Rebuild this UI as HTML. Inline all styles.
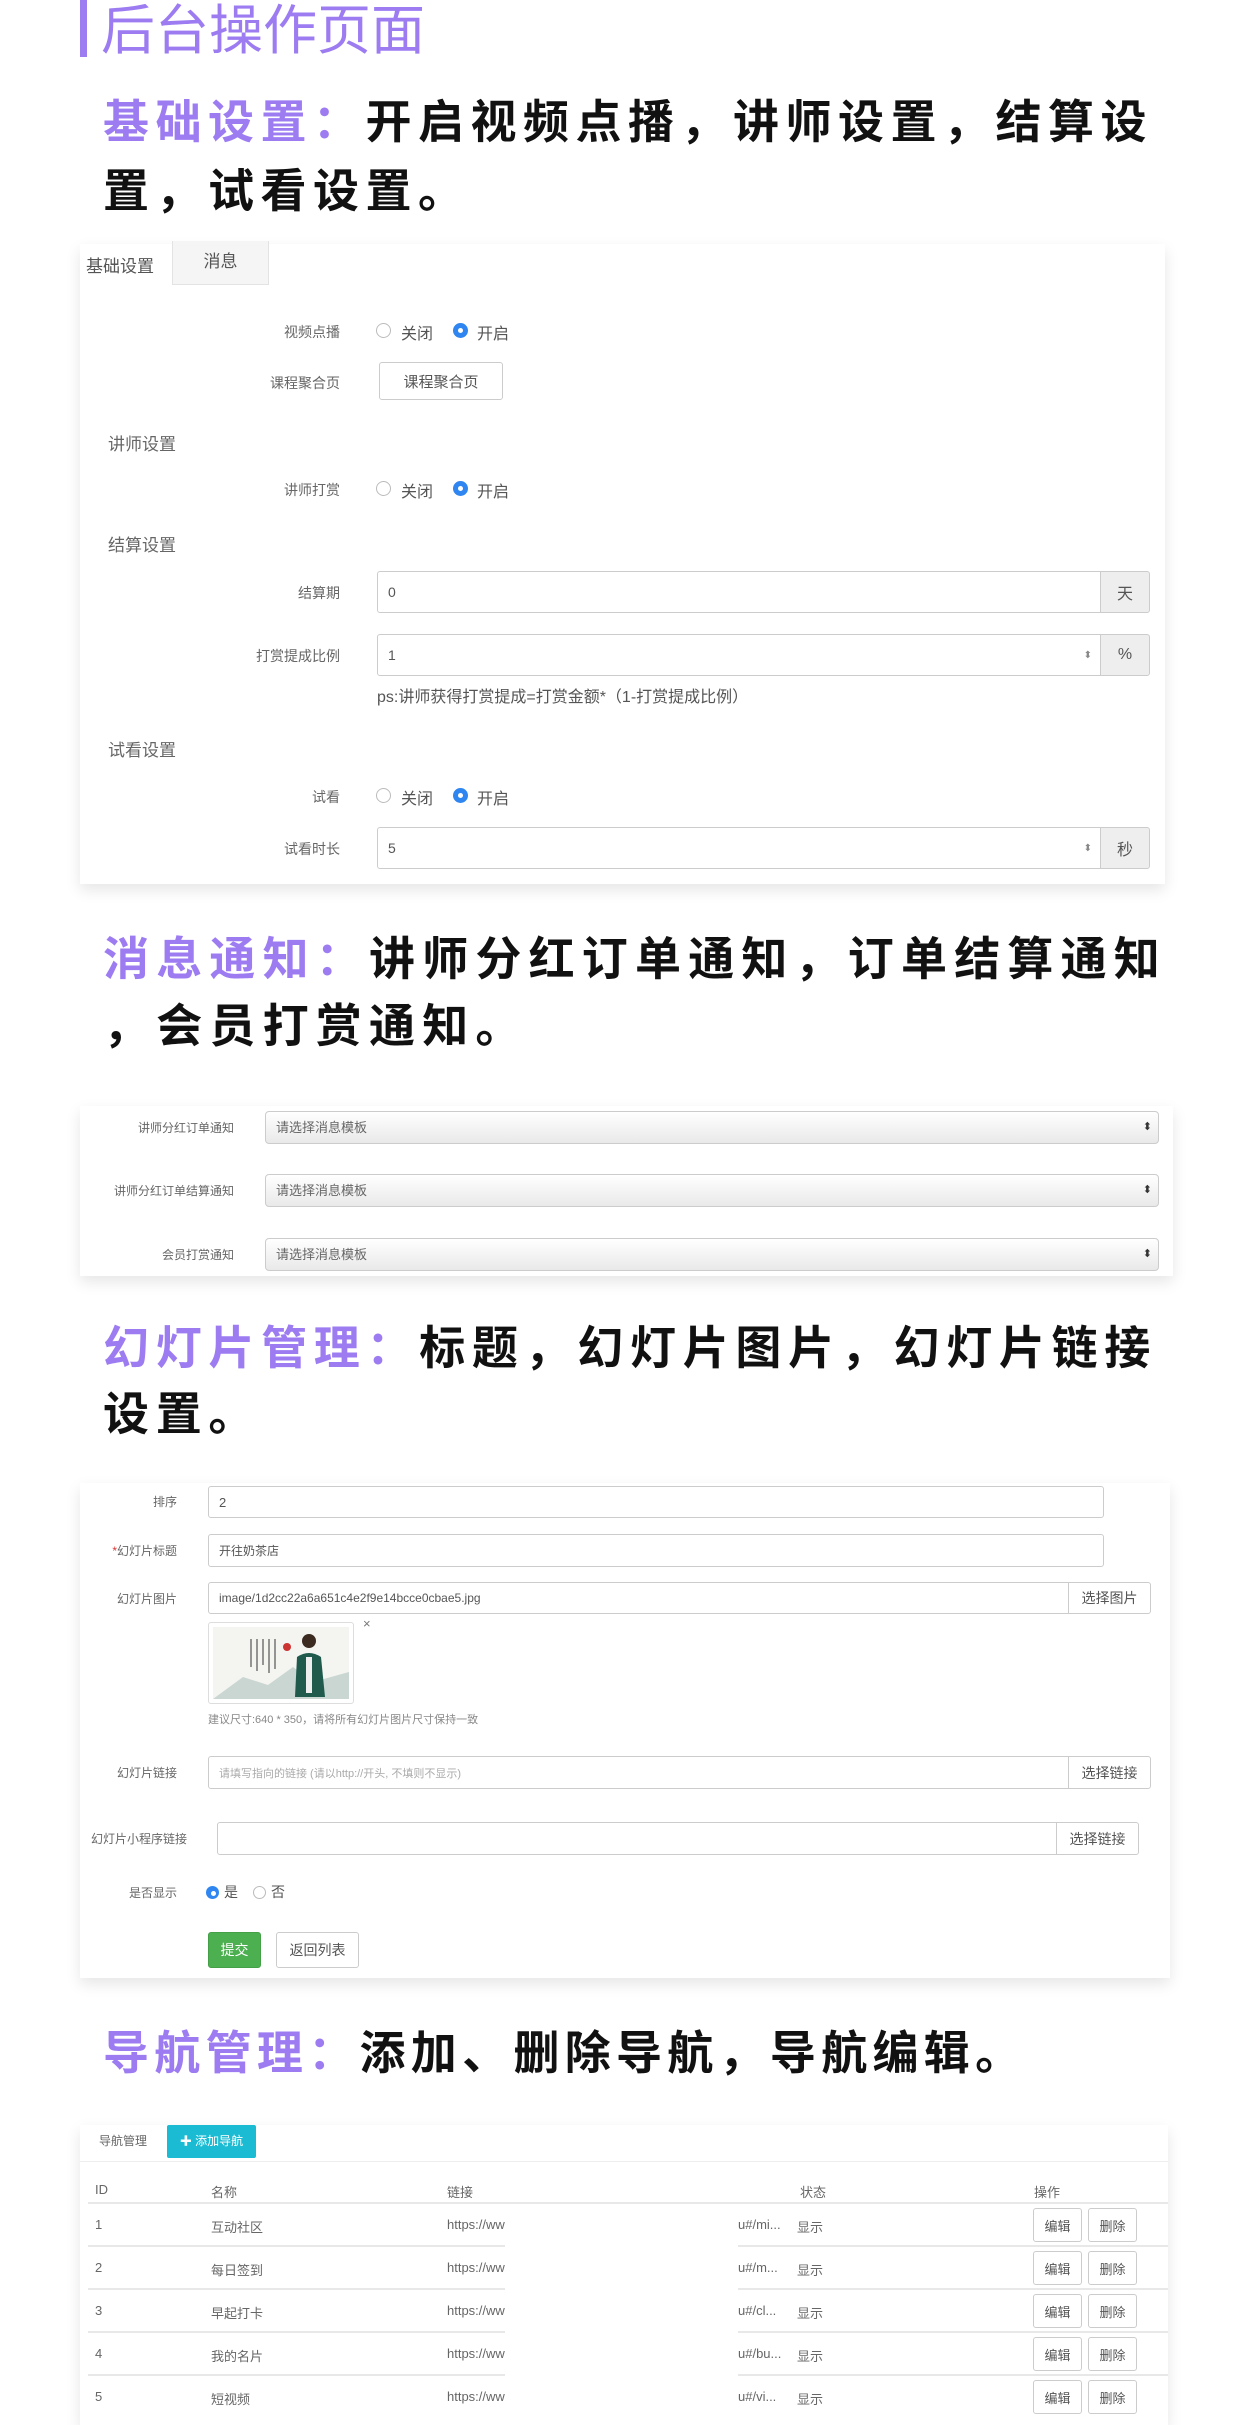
<!DOCTYPE html>
<html><head><meta charset="utf-8"><style>
*{margin:0;padding:0;box-sizing:border-box}
body{width:1242px;height:2404px;background:#fff;position:relative;overflow:hidden;font-family:"Liberation Sans","Noto Sans CJK SC",sans-serif;color:#555}
.a{position:absolute;white-space:nowrap}
.h{position:absolute;left:103px;font-size:46px;font-weight:bold;color:#111;line-height:1;white-space:nowrap}
.h b{color:#9d7cf2;font-weight:bold}
.panel{position:absolute;background:#fff;box-shadow:0 6px 14px rgba(0,0,0,.10)}
.lb{position:absolute;font-size:14px;color:#666;text-align:right;white-space:nowrap}
.sec{position:absolute;font-size:17px;color:#666}
.inp{position:absolute;border:1px solid #ccc;border-radius:3px;background:#fff;font-size:14px;color:#555;padding-left:10px;display:flex;align-items:center}
.add{position:absolute;border:1px solid #ccc;background:#eee;display:flex;align-items:center;justify-content:center;font-size:16px;color:#555;border-radius:0 3px 3px 0}
.rd{position:absolute;width:15px;height:15px;border-radius:50%;border:1px solid #bbb;background:#fff}
.rd.on{border:none;background:#2f86f0}
.rd.on:after{content:"";position:absolute;left:5px;top:5px;width:5px;height:5px;border-radius:50%;background:#fff}
.rt{position:absolute;font-size:16px;color:#555}
.sel{position:absolute;left:265px;width:894px;height:33px;border:1px solid #ccc;border-radius:4px;background:linear-gradient(#fff,#e9e9e9);font-size:13px;color:#666;padding-left:10px;line-height:31px}
.sel:after{content:"⬍";position:absolute;right:6px;top:0;font-size:11px;color:#333}
.btn{position:absolute;border:1px solid #ccc;border-radius:3px;background:#fff;font-size:13px;color:#555;display:flex;align-items:center;justify-content:center}
.td{position:absolute;font-size:13px;color:#666}
.ln{position:absolute;height:2px;background:#e8e8e8}
</style></head><body>

<div class="a" style="left:80px;top:0;width:7px;height:57px;background:#9d7cf2"></div>
<div class="a" style="left:101px;top:4px;font-size:54px;color:#9d7cf2;line-height:1">后台操作页面</div>

<div class="h" style="top:99px;letter-spacing:6.5px"><b>基础设置：</b>开启视频点播，讲师设置，结算设</div>
<div class="h" style="top:168px;letter-spacing:6.5px">置，试看设置。</div>

<!-- panel 1 -->
<div class="panel" style="left:80px;top:244px;width:1085px;height:640px"></div>
<div class="a" style="left:86px;top:252px;font-size:17px;color:#555">基础设置</div>
<div class="a" style="left:172px;top:241px;width:97px;height:44px;background:#f5f5f5;border:1px solid #e3e3e3;border-top:none;font-size:17px;color:#555;text-align:center;line-height:42px">消息</div>

<div class="lb" style="right:902px;top:322px">视频点播</div>
<div class="rd" style="left:376px;top:323px"></div><div class="rt" style="left:401px;top:320px">关闭</div>
<div class="rd on" style="left:453px;top:323px"></div><div class="rt" style="left:477px;top:320px">开启</div>
<div class="lb" style="right:902px;top:373px">课程聚合页</div>
<div class="btn" style="left:379px;top:362px;width:124px;height:38px;font-size:15px">课程聚合页</div>

<div class="sec" style="left:108px;top:430px">讲师设置</div>
<div class="lb" style="right:902px;top:480px">讲师打赏</div>
<div class="rd" style="left:376px;top:481px"></div><div class="rt" style="left:401px;top:478px">关闭</div>
<div class="rd on" style="left:453px;top:481px"></div><div class="rt" style="left:477px;top:478px">开启</div>

<div class="sec" style="left:108px;top:531px">结算设置</div>
<div class="lb" style="right:902px;top:583px">结算期</div>
<div class="inp" style="left:377px;top:571px;width:724px;height:42px;border-radius:3px 0 0 3px">0</div>
<div class="add" style="left:1100px;top:571px;width:50px;height:42px">天</div>
<div class="lb" style="right:902px;top:646px">打赏提成比例</div>
<div class="inp" style="left:377px;top:634px;width:724px;height:42px;border-radius:3px 0 0 3px">1<span style="position:absolute;right:8px;font-size:10px;color:#888">⬍</span></div>
<div class="add" style="left:1100px;top:634px;width:50px;height:42px">%</div>
<div class="a" style="left:377px;top:683px;font-size:16px;color:#555">ps:讲师获得打赏提成=打赏金额*（1-打赏提成比例）</div>

<div class="sec" style="left:108px;top:736px">试看设置</div>
<div class="lb" style="right:902px;top:787px">试看</div>
<div class="rd" style="left:376px;top:788px"></div><div class="rt" style="left:401px;top:785px">关闭</div>
<div class="rd on" style="left:453px;top:788px"></div><div class="rt" style="left:477px;top:785px">开启</div>
<div class="lb" style="right:902px;top:839px">试看时长</div>
<div class="inp" style="left:377px;top:827px;width:724px;height:42px;border-radius:3px 0 0 3px">5<span style="position:absolute;right:8px;font-size:10px;color:#888">⬍</span></div>
<div class="add" style="left:1100px;top:827px;width:50px;height:42px">秒</div>

<!-- heading 2 -->
<div class="h" style="top:936px;letter-spacing:7.2px"><b>消息通知：</b>讲师分红订单通知，订单结算通知</div>
<div class="h" style="top:1003px;letter-spacing:7.2px">，会员打赏通知。</div>

<div class="panel" style="left:80px;top:1106px;width:1093px;height:170px"></div>
<div class="lb" style="right:1008px;top:1119px;font-size:12px">讲师分红订单通知</div>
<div class="sel" style="top:1111px">请选择消息模板</div>
<div class="lb" style="right:1008px;top:1182px;font-size:12px">讲师分红订单结算通知</div>
<div class="sel" style="top:1174px">请选择消息模板</div>
<div class="lb" style="right:1008px;top:1246px;font-size:12px">会员打赏通知</div>
<div class="sel" style="top:1238px">请选择消息模板</div>

<!-- heading 3 -->
<div class="h" style="top:1325px;letter-spacing:6.7px"><b>幻灯片管理：</b>标题，幻灯片图片，幻灯片链接</div>
<div class="h" style="top:1391px;letter-spacing:6.7px">设置。</div>

<div class="panel" style="left:80px;top:1483px;width:1090px;height:495px"></div>
<div class="lb" style="right:1065px;top:1493px;font-size:12px">排序</div>
<div class="inp" style="left:208px;top:1486px;width:896px;height:32px;font-size:13px">2</div>
<div class="lb" style="right:1065px;top:1542px;font-size:12px"><span style="color:#d33">*</span>幻灯片标题</div>
<div class="inp" style="left:208px;top:1534px;width:896px;height:33px;font-size:12px">开往奶茶店</div>
<div class="lb" style="right:1065px;top:1590px;font-size:12px">幻灯片图片</div>
<div class="inp" style="left:208px;top:1582px;width:861px;height:32px;font-size:12px;border-radius:3px 0 0 3px">image/1d2cc22a6a651c4e2f9e14bcce0cbae5.jpg</div>
<div class="btn" style="left:1068px;top:1582px;width:83px;height:32px;border-radius:0 3px 3px 0;font-size:14px">选择图片</div>
<div class="a" style="left:208px;top:1622px;width:146px;height:82px;border:1px solid #ddd;border-radius:3px;padding:4px;background:#fff">
 <svg width="136" height="72" viewBox="0 0 136 72"><rect width="136" height="72" fill="#f4f4f1"/><path d="M0 72 L30 50 L55 58 L80 40 L100 55 L136 45 L136 72Z" fill="#c9d6d2"/><g stroke="#555" stroke-width="1.2"><line x1="38" y1="12" x2="38" y2="40"/><line x1="44" y1="12" x2="44" y2="44"/><line x1="50" y1="12" x2="50" y2="38"/><line x1="56" y1="12" x2="56" y2="46"/><line x1="62" y1="12" x2="62" y2="42"/></g><circle cx="74" cy="20" r="4" fill="#c33"/><circle cx="96" cy="14" r="7" fill="#3a2a20"/><path d="M82 70 L84 30 Q96 22 108 30 L112 70Z" fill="#1f5a4c"/><rect x="93" y="30" width="6" height="36" fill="#eee"/></svg>
</div>
<div class="a" style="left:363px;top:1616px;font-size:13px;color:#777">×</div>
<div class="a" style="left:208px;top:1711px;font-size:11px;color:#888">建议尺寸:640 * 350，请将所有幻灯片图片尺寸保持一致</div>
<div class="lb" style="right:1065px;top:1764px;font-size:12px">幻灯片链接</div>
<div class="inp" style="left:208px;top:1756px;width:861px;height:33px;font-size:11px;color:#aaa;border-radius:3px 0 0 3px">请填写指向的链接 (请以http://开头, 不填则不显示)</div>
<div class="btn" style="left:1068px;top:1756px;width:83px;height:33px;border-radius:0 3px 3px 0;font-size:14px">选择链接</div>
<div class="lb" style="right:1055px;top:1830px;font-size:12px">幻灯片小程序链接</div>
<div class="inp" style="left:217px;top:1822px;width:840px;height:33px;border-radius:3px 0 0 3px"></div>
<div class="btn" style="left:1056px;top:1822px;width:83px;height:33px;border-radius:0 3px 3px 0;font-size:14px">选择链接</div>
<div class="lb" style="right:1065px;top:1884px;font-size:12px">是否显示</div>
<div class="rd on" style="left:206px;top:1886px;width:13px;height:13px"></div><div class="rt" style="left:224px;top:1882px;font-size:14px">是</div>
<div class="rd" style="left:253px;top:1886px;width:13px;height:13px"></div><div class="rt" style="left:271px;top:1882px;font-size:14px">否</div>
<div class="btn" style="left:208px;top:1932px;width:53px;height:36px;background:#4caf50;border-color:#43a047;color:#fff;font-size:14px">提交</div>
<div class="btn" style="left:276px;top:1932px;width:83px;height:36px;font-size:14px">返回列表</div>

<!-- heading 4 -->
<div class="h" style="top:2030px;letter-spacing:5.3px"><b>导航管理：</b>添加、删除导航，导航编辑。</div>

<div class="panel" style="left:80px;top:2125px;width:1088px;height:300px"></div>
<div class="a" style="left:99px;top:2132px;font-size:12px;color:#666">导航管理</div>
<div class="a" style="left:167px;top:2125px;width:89px;height:33px;background:#1bbcd3;color:#fff;font-size:12px;line-height:33px;text-align:center;border-radius:2px"><b>✚</b> 添加导航</div>
<div class="ln" style="left:80px;top:2161px;width:1088px;height:1px;background:#eee"></div>
<div class="td" style="left:95px;top:2182px">ID</div>
<div class="td" style="left:211px;top:2182px">名称</div>
<div class="td" style="left:447px;top:2182px">链接</div>
<div class="td" style="left:800px;top:2182px">状态</div>
<div class="td" style="left:1034px;top:2182px">操作</div>
<div class="ln" style="left:88px;top:2202px;width:1080px"></div>

<div class="td" style="left:95px;top:2217px">1</div><div class="td" style="left:211px;top:2217px">互动社区</div><div class="td" style="left:447px;top:2217px">https://ww</div><div class="td" style="left:738px;top:2217px">u#/mi...</div><div class="td" style="left:797px;top:2217px">显示</div>
<div class="btn" style="left:1033px;top:2208px;width:49px;height:34px">编辑</div><div class="btn" style="left:1088px;top:2208px;width:49px;height:34px">删除</div>
<div class="ln" style="left:88px;top:2245px;width:417px"></div><div class="ln" style="left:738px;top:2245px;width:430px"></div>

<div class="td" style="left:95px;top:2260px">2</div><div class="td" style="left:211px;top:2260px">每日签到</div><div class="td" style="left:447px;top:2260px">https://ww</div><div class="td" style="left:738px;top:2260px">u#/m...</div><div class="td" style="left:797px;top:2260px">显示</div>
<div class="btn" style="left:1033px;top:2251px;width:49px;height:34px">编辑</div><div class="btn" style="left:1088px;top:2251px;width:49px;height:34px">删除</div>
<div class="ln" style="left:88px;top:2288px;width:417px"></div><div class="ln" style="left:738px;top:2288px;width:430px"></div>

<div class="td" style="left:95px;top:2303px">3</div><div class="td" style="left:211px;top:2303px">早起打卡</div><div class="td" style="left:447px;top:2303px">https://ww</div><div class="td" style="left:738px;top:2303px">u#/cl...</div><div class="td" style="left:797px;top:2303px">显示</div>
<div class="btn" style="left:1033px;top:2294px;width:49px;height:34px">编辑</div><div class="btn" style="left:1088px;top:2294px;width:49px;height:34px">删除</div>
<div class="ln" style="left:88px;top:2331px;width:417px"></div><div class="ln" style="left:738px;top:2331px;width:430px"></div>

<div class="td" style="left:95px;top:2346px">4</div><div class="td" style="left:211px;top:2346px">我的名片</div><div class="td" style="left:447px;top:2346px">https://ww</div><div class="td" style="left:738px;top:2346px">u#/bu...</div><div class="td" style="left:797px;top:2346px">显示</div>
<div class="btn" style="left:1033px;top:2337px;width:49px;height:34px">编辑</div><div class="btn" style="left:1088px;top:2337px;width:49px;height:34px">删除</div>
<div class="ln" style="left:88px;top:2374px;width:417px"></div><div class="ln" style="left:738px;top:2374px;width:430px"></div>

<div class="td" style="left:95px;top:2389px">5</div><div class="td" style="left:211px;top:2389px">短视频</div><div class="td" style="left:447px;top:2389px">https://ww</div><div class="td" style="left:738px;top:2389px">u#/vi...</div><div class="td" style="left:797px;top:2389px">显示</div>
<div class="btn" style="left:1033px;top:2380px;width:49px;height:34px">编辑</div><div class="btn" style="left:1088px;top:2380px;width:49px;height:34px">删除</div>
</body></html>
